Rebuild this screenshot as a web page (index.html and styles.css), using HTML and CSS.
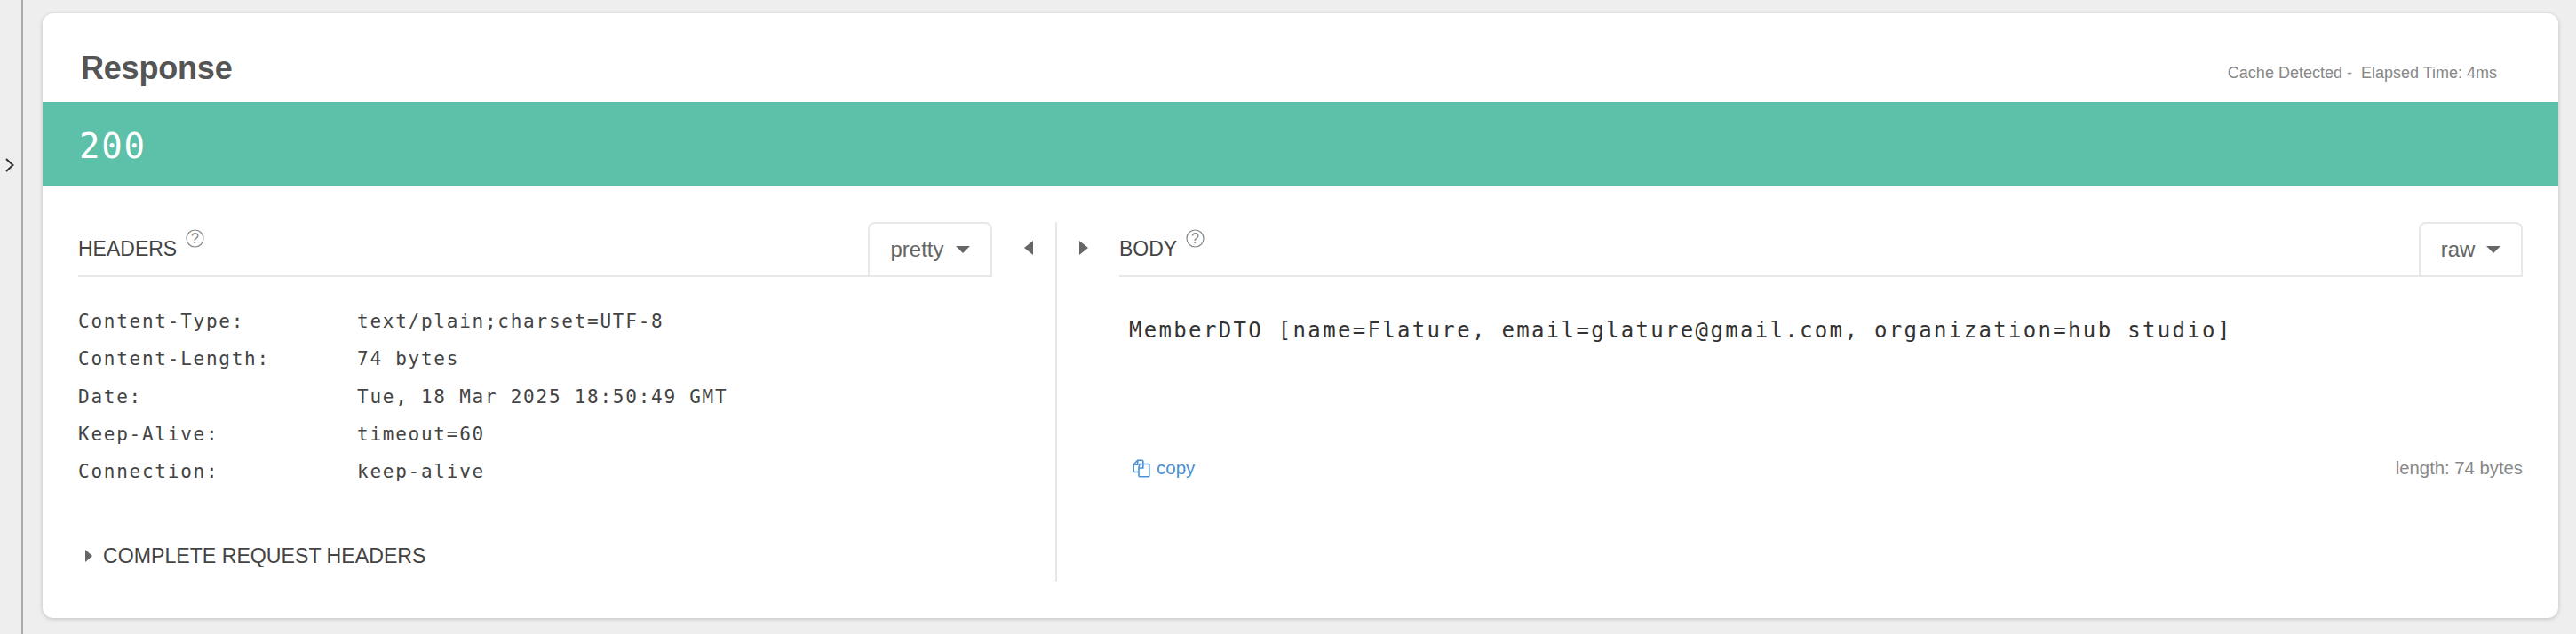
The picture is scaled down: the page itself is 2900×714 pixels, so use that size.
FILE: index.html
```html
<!DOCTYPE html>
<html lang="en">
<head>
<meta charset="utf-8">
<title>Response</title>
<link rel="stylesheet" href="styles.css">
</head>
<body>
<div class="page">
  <aside class="rail">
    <svg class="rail-chevron" width="12" height="18" viewBox="0 0 12 18"><path d="M2 2l7.5 7-7.5 7" fill="none" stroke="#333" stroke-width="2"/></svg>
  </aside>
  <main class="card">
    <header class="card-head">
      <h2 class="title">Response</h2>
      <div class="timing">Cache Detected -&nbsp; Elapsed Time: 4ms</div>
    </header>
    <div class="status">200</div>
    <div class="panels">
      <section class="panel panel-left">
        <div class="panel-head">
          <span class="panel-label">HEADERS</span>
          <svg class="help" width="21" height="21" viewBox="0 0 21 21"><circle cx="10.5" cy="10.5" r="9.5" fill="none" stroke="#888" stroke-width="1.2"/><text x="10.5" y="16" text-anchor="middle" class="help-q">?</text></svg>
          <div class="select select-pretty"><span>pretty</span><i class="caret"></i></div>
        </div>
        <dl class="rows">
          <dt>Content-Type:</dt><dd>text/plain;charset=UTF-8</dd>
          <dt>Content-Length:</dt><dd>74 bytes</dd>
          <dt>Date:</dt><dd>Tue, 18 Mar 2025 18:50:49 GMT</dd>
          <dt>Keep-Alive:</dt><dd>timeout=60</dd>
          <dt>Connection:</dt><dd>keep-alive</dd>
        </dl>
        <div class="complete"><i class="tri-right small"></i><span>COMPLETE REQUEST HEADERS</span></div>
      </section>
      <div class="splitter">
        <div class="split-side"><i class="tri-left"></i></div>
        <div class="split-side split-right"><i class="tri-right"></i></div>
      </div>
      <section class="panel panel-right">
        <div class="panel-head">
          <span class="panel-label">BODY</span>
          <svg class="help" width="21" height="21" viewBox="0 0 21 21"><circle cx="10.5" cy="10.5" r="9.5" fill="none" stroke="#888" stroke-width="1.2"/><text x="10.5" y="16" text-anchor="middle" class="help-q">?</text></svg>
          <div class="select select-raw"><span>raw</span><i class="caret"></i></div>
        </div>
        <pre class="body-text">MemberDTO [name=Flature, email=glature@gmail.com, organization=hub studio]</pre>
        <div class="body-foot">
          <a class="copy">
            <svg width="21" height="21" viewBox="0 0 21 21" fill="none" stroke="#4a90d2" stroke-width="1.6"><path d="M6 14.5H2.2a1 1 0 0 1-1-1V6l4.5-4.8h5.1a1 1 0 0 1 1 1V5"/><path d="M1.5 6.2h4.2V1.8"/><path d="M8 5.5h9.8a1 1 0 0 1 1 1v12.2a1 1 0 0 1-1 1H8a1 1 0 0 1-1-1V9.5z"/><path d="M7.2 10h4.6V5.7"/></svg>
            <span>copy</span>
          </a>
          <span class="length">length: 74 bytes</span>
        </div>
      </section>
    </div>
  </main>
</div>
</body>
</html>
```
FILE: styles.css
```css
* { box-sizing: border-box; }
html, body { margin: 0; padding: 0; }
body {
  background: #eee;
  font-family: "Liberation Sans", Arial, sans-serif;
  color: #444;
  height: 714px;
  overflow: hidden;
}
.page { display: flex; height: 714px; }
.rail {
  width: 26px;
  flex: none;
  border-right: 2px solid #aaa;
  background: #eee;
  position: relative;
}
.rail-chevron { position: absolute; left: 5px; top: 177px; }
.card {
  margin: 15px 20px 18px 22px;
  flex: 1;
  background: #fff;
  border-radius: 12px;
  box-shadow: 0 1px 5px rgba(0,0,0,.2);
  display: flex;
  flex-direction: column;
  overflow: hidden;
}
.card-head {
  height: 100px;
  flex: none;
  padding: 0 69px 0 43px;
  display: flex;
  justify-content: space-between;
  align-items: flex-start;
}
.title {
  margin: 41px 0 0;
  font-size: 36px;
  line-height: 42px;
  font-weight: 700;
  color: #555;
  letter-spacing: -.2px;
}
.timing {
  margin-top: 56px;
  font-size: 18px;
  line-height: 22px;
  color: #888;
}
.status {
  height: 94px;
  flex: none;
  background: #5cc1a8;
  color: #fff;
  font-family: "DejaVu Sans Mono", monospace;
  font-size: 39px;
  letter-spacing: 1.8px;
  line-height: 99px;
  padding-left: 41px;
}
.panels {
  display: flex;
  flex: 1;
  padding: 41px 40px 41px 40px;
}
.panel { display: flex; flex-direction: column; }
.panel-left { width: 1029px; flex: none; }
.panel-right { flex: 1; min-width: 0; }
.panel-head {
  height: 62px;
  flex: none;
  display: flex;
  align-items: flex-start;
  border-bottom: 2px solid #e8e8e8;
}
.panel-label {
  margin-top: 15px;
  font-size: 23px;
  line-height: 30px;
  color: #444;
}
.help { margin: 8px 0 0 10px; flex: none; }
.help-q { font-family: "Liberation Sans", Arial, sans-serif; font-size: 16px; fill: #888; }
.select {
  margin-left: auto;
  height: 60px;
  border: 2px solid #e8e8e8;
  border-bottom: 0;
  border-radius: 8px 8px 0 0;
  display: flex;
  align-items: center;
  justify-content: center;
  gap: 13px;
  font-size: 24px;
  color: #666;
}
.select-pretty { width: 140px; }
.select-raw { width: 117px; }
.caret {
  width: 0;
  height: 0;
  border-left: 8px solid transparent;
  border-right: 8px solid transparent;
  border-top: 8px solid #666;
}
.rows {
  margin: 29px 0 0;
  display: grid;
  grid-template-columns: 314px 1fr;
  font-family: "DejaVu Sans Mono", monospace;
  font-size: 21px;
  line-height: 42.3px;
  letter-spacing: 1.75px;
  color: #444;
}
.rows dt, .rows dd { margin: 0; }
.complete {
  margin-top: 59px;
  display: flex;
  align-items: center;
  gap: 12px;
  padding-left: 8px;
  font-size: 23.15px;
  line-height: 30px;
  color: #444;
}
.tri-right, .tri-left {
  display: block;
  width: 0;
  height: 0;
  border-top: 8.5px solid transparent;
  border-bottom: 8.5px solid transparent;
}
.tri-right { border-left: 10px solid #666; }
.tri-left { border-right: 10px solid #666; }
.tri-right.small { border-left-width: 8px; border-top-width: 7px; border-bottom-width: 7px; }
.splitter { width: 143px; flex: none; display: flex; }
.split-side { width: 71px; padding: 21px 0 0 36px; flex: none; }
.split-right { width: 72px; border-left: 2px solid #e8e8e8; padding-left: 25px; }
.body-text {
  margin: 42px 0 0 11px;
  font-family: "DejaVu Sans Mono", monospace;
  font-size: 24px;
  line-height: 36px;
  letter-spacing: 2.33px;
  color: #333;
}
.body-foot {
  margin-top: 125px;
  display: flex;
  justify-content: space-between;
  align-items: center;
  padding-left: 15px;
}
.copy { display: flex; align-items: center; gap: 6px; color: #4a90d2; font-size: 20.5px; }
.length { font-size: 20.3px; color: #888; }
```
